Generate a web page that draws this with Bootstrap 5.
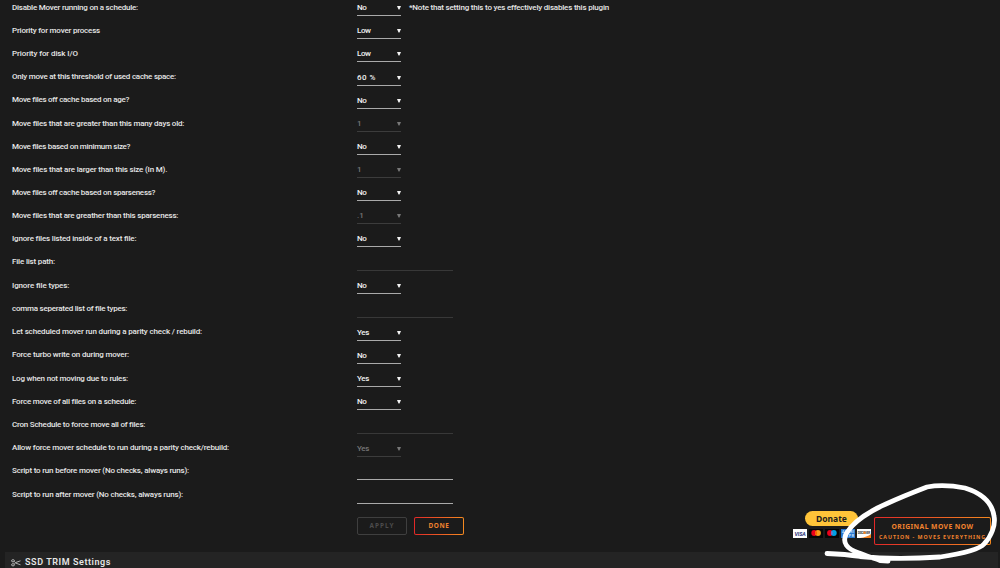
<!DOCTYPE html>
<html lang="en">
<head>
<meta charset="utf-8">
<title>Mover Tuning</title>
<link href="https://cdn.jsdelivr.net/npm/bootstrap@5.3.0/dist/css/bootstrap.min.css" rel="stylesheet">
<style>
body{background:#1b1b1b;color:#e6e6e6;font-family:Roboto,"Noto Sans",sans-serif;font-size:8px;font-weight:500;line-height:15px;height:568px;overflow:hidden}
.setting{height:23px;padding-left:12px}
.setting.tall{height:24px}
.setting.first{height:16px}
.setting>.name{width:345px;height:16px;white-space:nowrap}
.setting.tall>.name,.setting.high>.name{line-height:13px}
.pick{width:44px;height:16px;border-bottom:1px solid #aaa;color:#f2f2f2}
.pick svg{width:4px;height:5px;fill:currentColor}
.pick.off{border-color:#3c3c3c;color:#777}
.entry{width:96px;height:16px;border-bottom:1px solid #383838}
.entry.on{border-color:#aaa}
.actions{height:48px;padding:13px 9px 0 357px}
.act{font-family:"Noto Sans",sans-serif;border:1px solid #3f3f3f;border-radius:2px;width:50px;height:18px;font-size:6.4px;font-weight:700;letter-spacing:1.1px;color:#4c4c4c;background:transparent;line-height:16px;padding:0;text-align:center}
.act.hot{color:#f0822e;border-color:transparent;background:linear-gradient(#1b1b1b,#1b1b1b) padding-box,linear-gradient(90deg,#e22828,#f58a20) border-box}
.act.move{width:117px;height:28px;line-height:10px;padding-top:2px;font-size:6.8px}
.move small{display:block;font-size:5.3px;white-space:nowrap}
.donate{width:78px;margin:-6px 3px 0 0}
.pill{font-family:"Noto Sans",sans-serif;width:53px;height:15px;border-radius:8px;background:#ffc439;color:#1d1d1d;font-size:8.5px;font-weight:700;line-height:15px;text-align:center;margin-left:12px}
.cards{display:block;margin-top:3px}
.section-bar{height:18px;margin:0 2px 0 5px;padding:3px 0 0 6px;background:#242424;font-size:9px;font-weight:600;line-height:17px}
.loop{left:820px;top:480px}
</style>
</head>
<body class="position-relative">
<svg width="0" height="0" class="position-absolute"><symbol id="dn" viewBox="0 0 4 5"><path d="M0 1h4L2.500 4.500h-1z"/></symbol></svg>
<form class="d-flex flex-column">
<div class="setting first d-flex align-items-end"><div class="name"><span data-w="126">Disable Mover running on a schedule:</span></div><div class="pick d-flex justify-content-between align-items-center"><span data-w="9.5">No</span><svg><use href="#dn"/></svg></div><div class="name ps-2"><span data-w="200">*Note that setting this to yes effectively disables this plugin</span></div></div>
<div class="setting d-flex align-items-end"><div class="name"><span data-w="88">Priority for mover process</span></div><div class="pick d-flex justify-content-between align-items-center"><span data-w="13.5">Low</span><svg><use href="#dn"/></svg></div></div>
<div class="setting d-flex align-items-end"><div class="name"><span data-w="66">Priority for disk I/O</span></div><div class="pick d-flex justify-content-between align-items-center"><span data-w="13.5">Low</span><svg><use href="#dn"/></svg></div></div>
<div class="setting tall d-flex align-items-end"><div class="name"><span data-w="164">Only move at this threshold of used cache space:</span></div><div class="pick d-flex justify-content-between align-items-center"><span data-w="19">60 %</span><svg><use href="#dn"/></svg></div></div>
<div class="setting high d-flex align-items-end"><div class="name"><span data-w="117">Move files off cache based on age?</span></div><div class="pick d-flex justify-content-between align-items-center"><span data-w="9.5">No</span><svg><use href="#dn"/></svg></div></div>
<div class="setting d-flex align-items-end"><div class="name"><span data-w="172">Move files that are greater than this many days old:</span></div><div class="pick off d-flex justify-content-between align-items-center"><span>1</span><svg><use href="#dn"/></svg></div></div>
<div class="setting d-flex align-items-end"><div class="name"><span data-w="118">Move files based on minimum size?</span></div><div class="pick d-flex justify-content-between align-items-center"><span data-w="9.5">No</span><svg><use href="#dn"/></svg></div></div>
<div class="setting d-flex align-items-end"><div class="name"><span data-w="155">Move files that are larger than this size (In M).</span></div><div class="pick off d-flex justify-content-between align-items-center"><span>1</span><svg><use href="#dn"/></svg></div></div>
<div class="setting d-flex align-items-end"><div class="name"><span data-w="143">Move files off cache based on sparseness?</span></div><div class="pick d-flex justify-content-between align-items-center"><span data-w="9.5">No</span><svg><use href="#dn"/></svg></div></div>
<div class="setting d-flex align-items-end"><div class="name"><span data-w="166">Move files that are greather than this sparseness:</span></div><div class="pick off d-flex justify-content-between align-items-center"><span>.1</span><svg><use href="#dn"/></svg></div></div>
<div class="setting d-flex align-items-end"><div class="name"><span data-w="124">Ignore files listed inside of a text file:</span></div><div class="pick d-flex justify-content-between align-items-center"><span data-w="9.5">No</span><svg><use href="#dn"/></svg></div></div>
<div class="setting tall d-flex align-items-end"><div class="name"><span data-w="43">File list path:</span></div><div class="entry"></div></div>
<div class="setting d-flex align-items-end"><div class="name"><span data-w="57">Ignore file types:</span></div><div class="pick d-flex justify-content-between align-items-center"><span data-w="9.5">No</span><svg><use href="#dn"/></svg></div></div>
<div class="setting tall d-flex align-items-end"><div class="name"><span data-w="115">comma seperated list of file types:</span></div><div class="entry"></div></div>
<div class="setting high d-flex align-items-end"><div class="name"><span data-w="190">Let scheduled mover run during a parity check / rebuild:</span></div><div class="pick d-flex justify-content-between align-items-center"><span data-w="12">Yes</span><svg><use href="#dn"/></svg></div></div>
<div class="setting high d-flex align-items-end"><div class="name"><span data-w="117">Force turbo write on during mover:</span></div><div class="pick d-flex justify-content-between align-items-center"><span data-w="9.5">No</span><svg><use href="#dn"/></svg></div></div>
<div class="setting d-flex align-items-end"><div class="name"><span data-w="116">Log when not moving due to rules:</span></div><div class="pick d-flex justify-content-between align-items-center"><span data-w="12">Yes</span><svg><use href="#dn"/></svg></div></div>
<div class="setting d-flex align-items-end"><div class="name"><span data-w="124">Force move of all files on a schedule:</span></div><div class="pick d-flex justify-content-between align-items-center"><span data-w="9.5">No</span><svg><use href="#dn"/></svg></div></div>
<div class="setting tall d-flex align-items-end"><div class="name"><span data-w="133">Cron Schedule to force move all of files:</span></div><div class="entry"></div></div>
<div class="setting high d-flex align-items-end"><div class="name"><span data-w="217">Allow force mover schedule to run during a parity check/rebuild:</span></div><div class="pick off d-flex justify-content-between align-items-center"><span data-w="12">Yes</span><svg><use href="#dn"/></svg></div></div>
<div class="setting high d-flex align-items-end"><div class="name"><span data-w="177">Script to run before mover (No checks, always runs):</span></div><div class="entry on"></div></div>
<div class="setting tall d-flex align-items-end"><div class="name"><span data-w="171">Script to run after mover (No checks, always runs):</span></div><div class="entry on"></div></div>
<div class="actions d-flex align-items-start">
<button type="button" class="act">APPLY</button>
<button type="button" class="act hot" style="margin-left:7px"><span data-w="21">DONE</span></button>
<div class="donate ms-auto">
<div class="pill">Donate</div>
<svg class="cards" width="78" height="9" viewBox="0 0 78 9">
<rect width="14" height="9" fill="#fff"/><text x="1.6" y="6.7" font-size="5.3" font-weight="700" font-style="italic" fill="#26337a" textLength="11">VISA</text>
<rect x="16" width="14" height="9" fill="#070707"/><circle cx="21.2" cy="4" r="2.9" fill="#eb001b"/><circle cx="25" cy="4" r="2.9" fill="#f79e1b"/><path d="M23.1 1.8a2.9 2.9 0 0 1 0 4.4a2.9 2.9 0 0 1 0-4.4" fill="#ff5f00"/>
<rect x="32" width="14" height="9" fill="#070707"/><circle cx="37" cy="4" r="2.9" fill="#eb001b"/><circle cx="40.8" cy="4" r="2.9" fill="#00a2e5"/><path d="M38.9 1.8a2.9 2.9 0 0 1 0 4.4a2.9 2.9 0 0 1 0-4.4" fill="#7375cf"/>
<rect x="48" width="14" height="9" fill="#2878d0"/><text x="49" y="4.2" font-size="3.6" font-weight="700" fill="#cfe2f7" textLength="12">AMERI</text><text x="50" y="8" font-size="3.6" font-weight="700" fill="#cfe2f7" textLength="11">EXPR</text>
<rect x="64" width="14" height="9" fill="#fff"/><path d="M78 5v4H67q7-1 11-4" fill="#f58220"/><text x="64.7" y="5" font-size="3.2" font-weight="700" fill="#444" textLength="12.6">DISCOVER</text><circle cx="71.5" cy="3.8" r="1.3" fill="#f58220"/>
</svg>
</div>
<button type="button" class="act hot move"><span data-w="82">ORIGINAL MOVE NOW</span><small><span data-w="107">CAUTION - MOVES EVERYTHING</span></small></button>
</div>
</form>
<div class="section-bar d-flex align-items-center"><svg width="10" height="8" viewBox="0 0 10 8" fill="none" stroke="#bbb" stroke-width=".9" class="me-1"><ellipse cx="2" cy="1.8" rx="1.5" ry="1.1"/><ellipse cx="2" cy="5.8" rx="1.5" ry="1.1"/><path d="M3.3 2.4 5 4.2 9.5 5.800M3.3 5.200 5 3.4 9.5 1.800"/></svg><span data-w="86">SSD TRIM Settings</span></div>
<svg class="loop position-absolute" width="180" height="88" viewBox="820 480 180 88" fill="none" stroke="#fff" stroke-width="4.800" stroke-linecap="round" stroke-linejoin="round">
<path d="M827 553.5C842 554 851 555 860 556.5C885 559 910 559 940 557C960 554 979 550 984 544C991 537 996 525 994 516C992 502 981 493 965 488C950 485 937 485 927 487C914 492 899 498 886 504C870 511 853 522 846 534C842 543 847 549 859 553C866 556 874 558 880 560.5L888 561"/>
</svg>
<script>
// Space the letters so each caption fills its nominal width.
document.querySelectorAll('[data-w]').forEach(function (s) {
  s.style.letterSpacing = '0px';
  var w = s.getBoundingClientRect().width;
  s.style.letterSpacing = ((s.dataset.w - w) / s.textContent.length).toFixed(3) + 'px';
});
</script>
<script src="https://cdn.jsdelivr.net/npm/bootstrap@5.3.0/dist/js/bootstrap.bundle.min.js"></script>
</body>
</html>
